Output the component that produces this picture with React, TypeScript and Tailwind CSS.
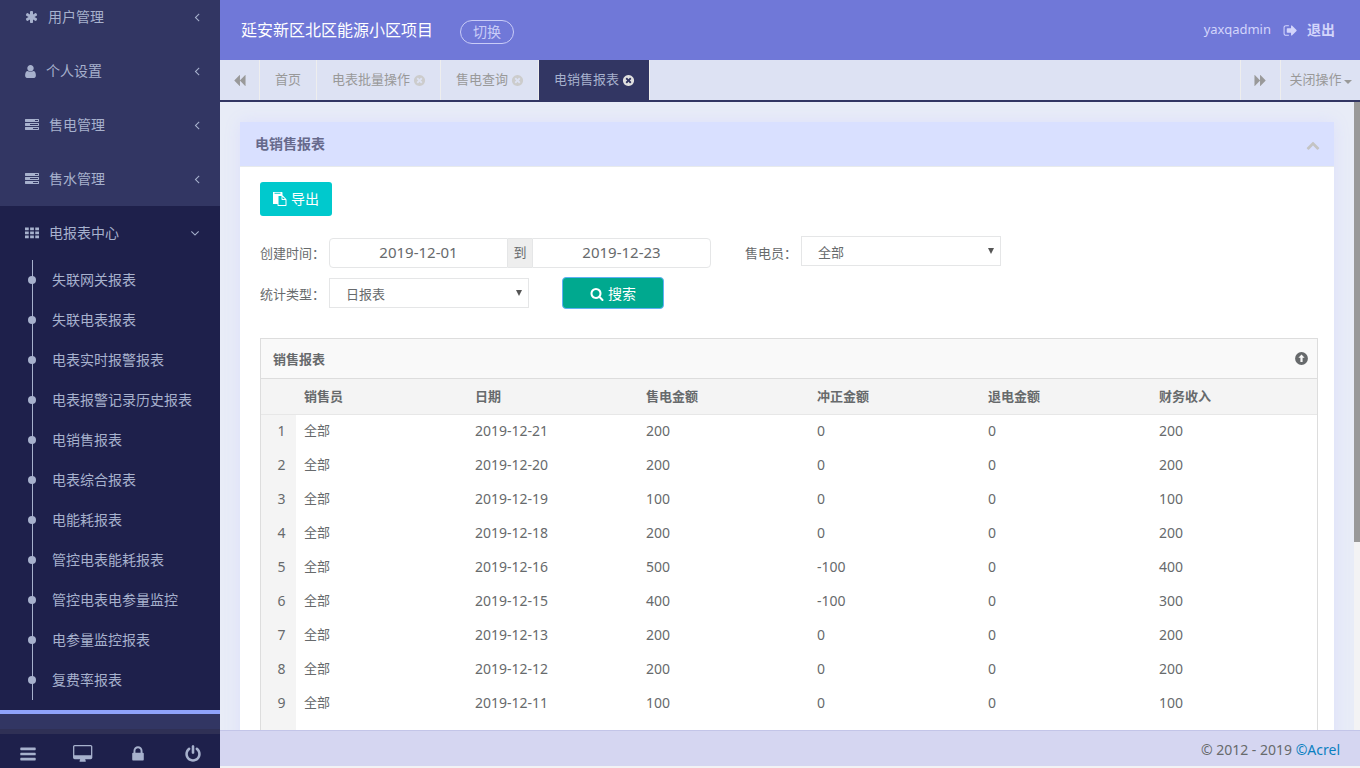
import React, { useState } from 'react';

const PATHS = {
  asterisk:
    'M1546 1050q46 26 59.5 77.5t-12.5 97.5l-64 110q-26 46-77.5 59.5t-97.5-12.5l-266-153v307q0 52-38 90t-90 38h-128q-52 0-90-38t-38-90v-307l-266 153q-46 26-97.5 12.5t-77.5-59.5l-64-110q-26-46-12.5-97.5t59.5-77.5l266-154-266-154q-46-26-59.5-77.5t12.5-97.5l64-110q26-46 77.5-59.5t97.5 12.5l266 153v-307q0-52 38-90t90-38h128q52 0 90 38t38 90v307l266-153q46-26 97.5-12.5t77.5 59.5l64 110q26 46 12.5 97.5t-59.5 77.5l-266 154z',
  user: 'M1536 1399q0 109-62.5 187t-150.5 78h-854q-88 0-150.5-78t-62.5-187q0-85 8.5-160.5t31.5-152 58.5-131 94-89 134.5-34.5q131 128 313 128t313-128q76 0 134.5 34.5t94 89 58.5 131 31.5 152 8.5 160.5zm-256-887q0 159-112.5 271.5t-271.5 112.5-271.5-112.5-112.5-271.5 112.5-271.5 271.5-112.5 271.5 112.5 112.5 271.5z',
  tasks:
    'M1024 1408h640v-128h-640v128zm-384-512h1024v-128h-1024v128zm640-512h384v-128h-384v128zm512 832v256q0 26-19 45t-45 19h-1664q-26 0-45-19t-19-45v-256q0-26 19-45t45-19h1664q26 0 45 19t19 45zm0-512v256q0 26-19 45t-45 19h-1664q-26 0-45-19t-19-45v-256q0-26 19-45t45-19h1664q26 0 45 19t19 45zm0-512v256q0 26-19 45t-45 19h-1664q-26 0-45-19t-19-45v-256q0-26 19-45t45-19h1664q26 0 45 19t19 45z',
  grid: 'M0 192h480v352h-480zM656 192h480v352h-480zM1312 192h480v352h-480zM0 704h480v352h-480zM656 704h480v352h-480zM1312 704h480v352h-480zM0 1216h480v352h-480zM656 1216h480v352h-480zM1312 1216h480v352h-480z',
  angleLeft:
    'M1203 544q0 13-10 23l-393 393 393 393q10 10 10 23t-10 23l-50 50q-10 10-23 10t-23-10l-466-466q-10-10-10-23t10-23l466-466q10-10 23-10t23 10l50 50q10 10 10 23z',
  angleDown:
    'M1395 736q0 13-10 23l-466 466q-10 10-23 10t-23-10l-466-466q-10-10-10-23t10-23l50-50q10-10 23-10t23 10l393 393 393-393q10-10 23-10t23 10l50 50q10 10 10 23z',
  backward:
    'M1683 141q19-19 32-13t13 32v1472q0 26-13 32t-32-13l-710-710q-9-9-13-19v710q0 26-13 32t-32-13l-710-710q-19-19-19-45t19-45l710-710q19-19 32-13t13 32v710q4-10 13-19z',
  timesCircle:
    'M1277 1122q0-26-19-45l-181-181 181-181q19-19 19-45 0-27-19-46l-90-90q-19-19-46-19-26 0-45 19l-181 181-181-181q-19-19-45-19-27 0-46 19l-90 90q-19 19-19 46 0 26 19 45l181 181-181 181q-19 19-19 45 0 27 19 46l90 90q19 19 46 19 26 0 45-19l181-181 181 181q19 19 45 19 27 0 46-19l90-90q19-19 19-46zm387-226q0 209-103 385.5t-279.5 279.5-385.5 103-385.5-103-279.5-279.5-103-385.5 103-385.5 279.5-279.5 385.5-103 385.5 103 279.5 279.5 103 385.5z',
  search:
    'M1216 832q0-185-131.5-316.5t-316.5-131.5-316.5 131.5-131.5 316.5 131.5 316.5 316.5 131.5 316.5-131.5 131.5-316.5zm512 832q0 52-38 90t-90 38q-54 0-90-38l-343-342q-179 124-399 124-143 0-273.5-55.5t-225-150-150-225-55.5-273.5 55.5-273.5 150-225 225-150 273.5-55.5 273.5 55.5 225 150 150 225 55.5 273.5q0 220-124 399l343 343q37 37 37 90z',
  paste:
    'M704 1664h896v-640h-416q-40 0-68-28t-28-68v-416h-384v1152zm256-1472v-64q0-13-9.5-22.5t-22.5-9.5h-704q-13 0-22.5 9.5t-9.5 22.5v64q0 13 9.5 22.5t22.5 9.5h704q13 0 22.5-9.5t9.5-22.5zm256 704h299l-299-299v299zm512 128v672q0 40-28 68t-68 28h-960q-40 0-68-28t-28-68v-160h-544q-40 0-68-28t-28-68v-1344q0-40 28-68t68-28h1088q40 0 68 28t28 68v328q21 13 36 28l408 408q28 28 48 76t20 88z',
  signOut:
    'M704 1440q0 4 1 20t.5 26.5-3 23.5-10 19.5-20.500 6.500h-320q-119 0-203.500-84.500t-84.500-203.500v-704q0-119 84.500-203.500t203.500-84.500h320q13 0 22.500 9.500t9.500 22.500q0 4 1 20t.5 26.500-3 23.500-10 19.500-20.500 6.500h-320q-66 0-113 47t-47 113v704q0 66 47 113t113 47h312l11.500 1 11.500 3 8 5.500 7 9 2 13.500zm928-544q0 26-19 45l-544 544q-19 19-45 19t-45-19-19-45v-288h-448q-26 0-45-19t-19-45v-384q0-26 19-45t45-19h448v-288q0-26 19-45t45-19 45 19l544 544q19 19 19 45z',
  bars: 'M128 320q0-64 64-64h1408q64 0 64 64v128q0 64-64 64h-1408q-64 0-64-64zM128 832q0-64 64-64h1408q64 0 64 64v128q0 64-64 64h-1408q-64 0-64-64zM128 1344q0-64 64-64h1408q64 0 64 64v128q0 64-64 64h-1408q-64 0-64-64z',
  desktop:
    'M1728 992v-832q0-13-9.5-22.5t-22.5-9.5h-1600q-13 0-22.5 9.5t-9.5 22.5v832q0 13 9.5 22.5t22.5 9.5h1600q13 0 22.5-9.5t9.5-22.5zm128-832v1088q0 66-47 113t-113 47h-544q0 37 16 77.5t32 71 16 43.5q0 26-19 45t-45 19h-512q-26 0-45-19t-19-45q0-14 16-44t32-70 16-78h-544q-66 0-113-47t-47-113v-1088q0-66 47-113t113-47h1600q66 0 113 47t47 113z',
  lock: 'M640 768h512v-192q0-106-75-181t-181-75-181 75-75 181v192zm832 96v576q0 40-28 68t-68 28h-960q-40 0-68-28t-28-68v-576q0-40 28-68t68-28h32v-192q0-184 132-316t316-132 316 132 132 316v192h32q40 0 68 28t28 68z',
  power:
    'M1664 896q0 156-61 298t-164 245-245 164-298 61-298-61-245-164-164-245-61-298q0-182 80.5-343t226.5-270q43-32 95.5-25t83.5 50q32 42 24.5 94.5t-49.5 84.5q-98 74-151.5 181t-53.5 228q0 104 40.5 198.5t109.5 163.5 163.5 109.5 198.5 40.5 198.5-40.5 163.5-109.5 109.5-163.5 40.5-198.5q0-121-53.5-228t-151.5-181q-42-32-49.5-84.5t24.5-94.5q31-43 84-50t95 25q146 109 226.5 270t80.5 343zm-640-768v640q0 52-38 90t-90 38-90-38-38-90v-640q0-52 38-90t90-38 90 38 38 90z',
  arrowUpCircle:
    'M896 128a768 768 0 1 0 0 1536a768 768 0 1 0 0-1536zM896 430l370 390h-240v480h-260v-480h-240z',
  chevronUp:
    'M1683 1331l-166 165q-19 19-45 19t-45-19l-531-531-531 531q-19 19-45 19t-45-19l-166-165q-19-19-19-45.500t19-45.500l742-741q19-19 45-19t45 19l742 741q19 19 19 45.500t-19 45.500z',
};

type IconName = keyof typeof PATHS;

function Icon({ name, className, viewBox = '0 0 1792 1792' }: { name: IconName; className: string; viewBox?: string }) {
  return (
    <svg viewBox={viewBox} className={`shrink-0 ${className}`} fill="currentColor" fillRule="evenodd" aria-hidden="true">
      <path d={PATHS[name]} />
    </svg>
  );
}

const MENU: { icon: IconName; label: string; viewBox?: string; size: string }[] = [
  { icon: 'asterisk', label: '用户管理', viewBox: '64 0 1664 1792', size: 'h-[14px] w-[13px]' },
  { icon: 'user', label: '个人设置', viewBox: '256 0 1280 1792', size: 'h-[15px] w-[11px]' },
  { icon: 'tasks', label: '售电管理', size: 'size-[14px]' },
  { icon: 'tasks', label: '售水管理', size: 'size-[14px]' },
];

const REPORTS = [
  '失联网关报表',
  '失联电表报表',
  '电表实时报警报表',
  '电表报警记录历史报表',
  '电销售报表',
  '电表综合报表',
  '电能耗报表',
  '管控电表能耗报表',
  '管控电表电参量监控',
  '电参量监控报表',
  '复费率报表',
];

function Sidebar() {
  return (
    <aside className="flex w-[220px] shrink-0 flex-col bg-[#323663] text-sm text-[#a7b1cd]">
      <nav className="min-h-0 flex-1 overflow-hidden">
        <ul className="-mt-2.5">
          {MENU.map((m) => (
            <li key={m.label}>
              <a href="#" className="flex h-[54px] items-center gap-2.5 pr-4 pl-[25px]">
                <Icon name={m.icon} viewBox={m.viewBox} className={m.size} />
                <span className="flex-1">{m.label}</span>
                <Icon name="angleLeft" className="size-[14px]" />
              </a>
            </li>
          ))}
          <li className="border-b-4 border-[#8fa3fb] bg-[#1e204b] pb-2.5">
            <a href="#" className="flex h-[54px] items-center gap-2.5 pr-[18px] pl-[25px]">
              <Icon name="grid" className="size-[14px]" />
              <span className="flex-1">电报表中心</span>
              <Icon name="angleDown" className="size-[14px]" />
            </a>
            <ul className="ml-8 border-l border-[#a7b1cd]">
              {REPORTS.map((r) => (
                <li key={r}>
                  <a href="#" className="-ml-[5px] flex h-10 items-center gap-4">
                    <span className="size-2 shrink-0 rounded-full bg-[#a7b1cd]" />
                    {r}
                  </a>
                </li>
              ))}
            </ul>
          </li>
        </ul>
      </nav>
      <div className="grid h-[39px] grid-cols-4 border-t-[5px] border-[#2f3055] bg-[#1e204b]">
        <button aria-label="菜单" className="flex items-center justify-center pt-1.5">
          <Icon name="bars" className="size-[18px]" />
        </button>
        <button aria-label="全屏" className="flex items-center justify-center pt-1.5">
          <Icon name="desktop" viewBox="-32 0 1920 1792" className="h-[18px] w-5" />
        </button>
        <button aria-label="锁定" className="flex items-center justify-center pt-1.5">
          <Icon name="lock" className="size-[18px]" />
        </button>
        <button aria-label="关闭" className="flex items-center justify-center pt-1.5">
          <Icon name="power" className="size-[18px]" />
        </button>
      </div>
    </aside>
  );
}

function TopBar() {
  return (
    <header className="flex h-[60px] shrink-0 items-center bg-[#7078d8] pr-[25px] pl-[21px]">
      <h1 className="text-base text-white">延安新区北区能源小区项目</h1>
      <button className="mt-1 ml-[27px] h-6 rounded-full border border-[#c9ccf7] px-3 text-sm leading-5 text-[#c9ccf7]">
        切换
      </button>
      <div className="ml-auto flex items-center text-[#d3d5fb]">
        <span className="text-[13px]">yaxqadmin</span>
        <a href="#" className="ml-3 flex items-center gap-[9px] text-sm font-bold">
          <Icon name="signOut" className="size-[15px]" />
          退出
        </a>
      </div>
    </header>
  );
}

function TabBar() {
  return (
    <div className="flex h-[42px] shrink-0 border-b-2 border-[#323663] bg-[#dde2f3] text-[13px] text-[#999]">
      <button aria-label="向左" className="flex w-10 items-center justify-center border-r border-[#eee]">
        <Icon name="backward" className="size-[13px]" />
      </button>
      <a href="#" className="flex items-center border-r border-[#eee] px-[15px]">
        首页
      </a>
      {['电表批量操作', '售电查询'].map((t) => (
        <a key={t} href="#" className="flex items-center gap-[3px] border-r border-[#eee] pr-[14px] pl-[15px]">
          {t}
          <Icon name="timesCircle" className="size-[13px] text-[#ccc]" />
        </a>
      ))}
      <a href="#" className="flex items-center gap-[3px] bg-[#323663] pr-[14px] pl-[15px] text-[#a7b1cd]">
        电销售报表
        <Icon name="timesCircle" className="size-[13px] text-[#e0e0e0]" />
      </a>
      <div className="flex-1 border-l border-[#eee]" />
      <button aria-label="向右" className="flex w-10 items-center justify-center border-l border-[#eee]">
        <Icon name="backward" className="size-[13px] rotate-180" />
      </button>
      <button className="flex w-20 items-center justify-center gap-0.5 border-l border-[#eee]">
        关闭操作
        <svg viewBox="0 0 8 4" className="mt-1 h-1 w-2" fill="currentColor" aria-hidden="true">
          <path d="M0 0h8l-4 4z" />
        </svg>
      </button>
    </div>
  );
}

function SelectBox({ id, options }: { id: string; options: string[] }) {
  return (
    <div className="relative w-[200px]">
      <select
        id={id}
        className="block h-[30px] w-full appearance-none border border-[#e5e6e7] bg-white pt-1 pl-4 text-[13px] outline-none"
      >
        {options.map((o) => (
          <option key={o}>{o}</option>
        ))}
      </select>
      <svg
        viewBox="0 0 6 6"
        className="pointer-events-none absolute top-3 right-[7px] size-1.5"
        fill="#555"
        aria-hidden="true"
      >
        <path d="M0 0h6l-3 6z" />
      </svg>
    </div>
  );
}

function Filters() {
  const [from, setFrom] = useState('2019-12-01');
  const [to, setTo] = useState('2019-12-23');
  return (
    <form className="mt-5 flex flex-col gap-[9px] text-[13px]" onSubmit={(e) => e.preventDefault()}>
      <div className="flex items-start">
        <label htmlFor="from" className="mt-0.5 w-[69px] leading-[30px]">
          创建时间：
        </label>
        <div className="mt-0.5 flex h-[30px] w-[382px]">
          <input
            id="from"
            value={from}
            onChange={(e) => setFrom(e.target.value)}
            className="min-w-0 flex-1 rounded-l-sm border border-[#e5e6e7] pb-0.5 text-center text-[15px] outline-none"
          />
          <label htmlFor="to" className="flex w-6 items-center justify-center border-y border-[#e5e6e7] bg-[#eee]">
            到
          </label>
          <input
            id="to"
            value={to}
            onChange={(e) => setTo(e.target.value)}
            className="min-w-0 flex-1 rounded-r-sm border border-[#e5e6e7] pb-0.5 text-center text-[15px] outline-none"
          />
        </div>
        <label htmlFor="seller" className="mt-0.5 ml-[34px] w-14 leading-[30px]">
          售电员：
        </label>
        <SelectBox id="seller" options={['全部']} />
      </div>
      <div className="flex items-center">
        <label htmlFor="kind" className="w-[69px] pt-1">
          统计类型：
        </label>
        <SelectBox id="kind" options={['日报表', '月报表', '年报表']} />
        <button className="ml-[33px] flex h-8 w-[102px] items-center justify-center gap-1 rounded-sm border border-[#5fb0f5] bg-[#00a98f] pt-0.5 text-sm text-white">
          <Icon name="search" className="size-[14px]" />
          搜索
        </button>
      </div>
    </form>
  );
}

const COLUMNS = ['销售员', '日期', '售电金额', '冲正金额', '退电金额'];
const ROWS: [string, number, number, number, number][] = [
  ['2019-12-21', 200, 0, 0, 200],
  ['2019-12-20', 200, 0, 0, 200],
  ['2019-12-19', 100, 0, 0, 100],
  ['2019-12-18', 200, 0, 0, 200],
  ['2019-12-16', 500, -100, 0, 400],
  ['2019-12-15', 400, -100, 0, 300],
  ['2019-12-13', 200, 0, 0, 200],
  ['2019-12-12', 200, 0, 0, 200],
  ['2019-12-11', 100, 0, 0, 100],
];

function ReportTable() {
  return (
    <section className="mt-[29px] border border-[#ddd]">
      <div className="flex h-10 items-center justify-between border-b border-[#ddd] bg-[#f9f9f9] pr-2 pl-3">
        <h3 className="pt-0.5 text-[13px] font-bold">销售报表</h3>
        <button aria-label="收起">
          <Icon name="arrowUpCircle" className="size-[15px]" />
        </button>
      </div>
      <table className="w-full table-fixed border-collapse text-left">
        <thead>
          <tr className="h-[35px] border-b border-[#e7e7e7] bg-[#f4f4f4] text-[13px]">
            <th className="w-[35px]" />
            {COLUMNS.map((c) => (
              <th key={c} className="w-[171px] px-2 font-bold">
                {c}
              </th>
            ))}
            <th className="px-2 font-bold">财务收入</th>
          </tr>
        </thead>
        <tbody>
          {ROWS.map(([date, ...nums], i) => (
            <tr key={date} className="h-[34px] text-sm">
              <td className="bg-[#f4f4f4] pl-1.5 text-center">{i + 1}</td>
              <td className="px-2 pb-0.5 text-[13px]">全部</td>
              <td className="px-2">{date}</td>
              {nums.map((n, j) => (
                <td key={j} className="px-2">
                  {n}
                </td>
              ))}
            </tr>
          ))}
          <tr className="h-[34px]">
            <td className="bg-[#f4f4f4]" />
            <td colSpan={6} />
          </tr>
        </tbody>
      </table>
    </section>
  );
}

export default function App() {
  return (
    <div className="flex h-screen w-full overflow-hidden bg-[#f3f3f4] font-['Noto_Sans','Noto_Sans_CJK_SC',sans-serif] text-[#676a6c]">
      <Sidebar />
      <div className="flex min-w-0 flex-1 flex-col">
        <TopBar />
        <TabBar />
        <div className="flex min-h-0 flex-1">
          <main className="min-w-0 flex-1 overflow-hidden bg-[#e8ecf7] p-5">
            <section className="bg-white shadow-[0_0_16px_#dcdffb]">
              <div className="flex h-[45px] items-center justify-between border-b border-[#e7eaec] bg-[#d9e0ff] pr-[14px] pl-[15px]">
                <h2 className="text-sm font-bold text-[#676a8c]">电销售报表</h2>
                <button aria-label="折叠" className="mt-0.5 text-[#c4c4c4]">
                  <Icon name="chevronUp" className="size-[14px]" />
                </button>
              </div>
              <div className="pt-[15px] pr-4 pb-5 pl-5">
                <button className="flex h-[34px] w-[72px] items-center justify-center gap-1 rounded-[3px] bg-[#00c9cd] text-sm text-white">
                  <Icon name="paste" className="size-[14px]" />
                  导出
                </button>
                <Filters />
                <ReportTable />
              </div>
            </section>
          </main>
          <div className="w-1.5 shrink-0 bg-[#f3f3f4]">
            <div className="h-[70%] bg-[#999]" />
          </div>
        </div>
        <footer className="mb-0.5 flex h-9 shrink-0 items-center justify-end border-t border-[#c3c5e8] bg-[#d5d6f1] pt-0.5 pr-5 text-sm">
          <span>
            © 2012 - 2019{' '}
            <a href="#" className="text-[#0a7fc0]">
              ©Acrel
            </a>
          </span>
        </footer>
      </div>
    </div>
  );
}
